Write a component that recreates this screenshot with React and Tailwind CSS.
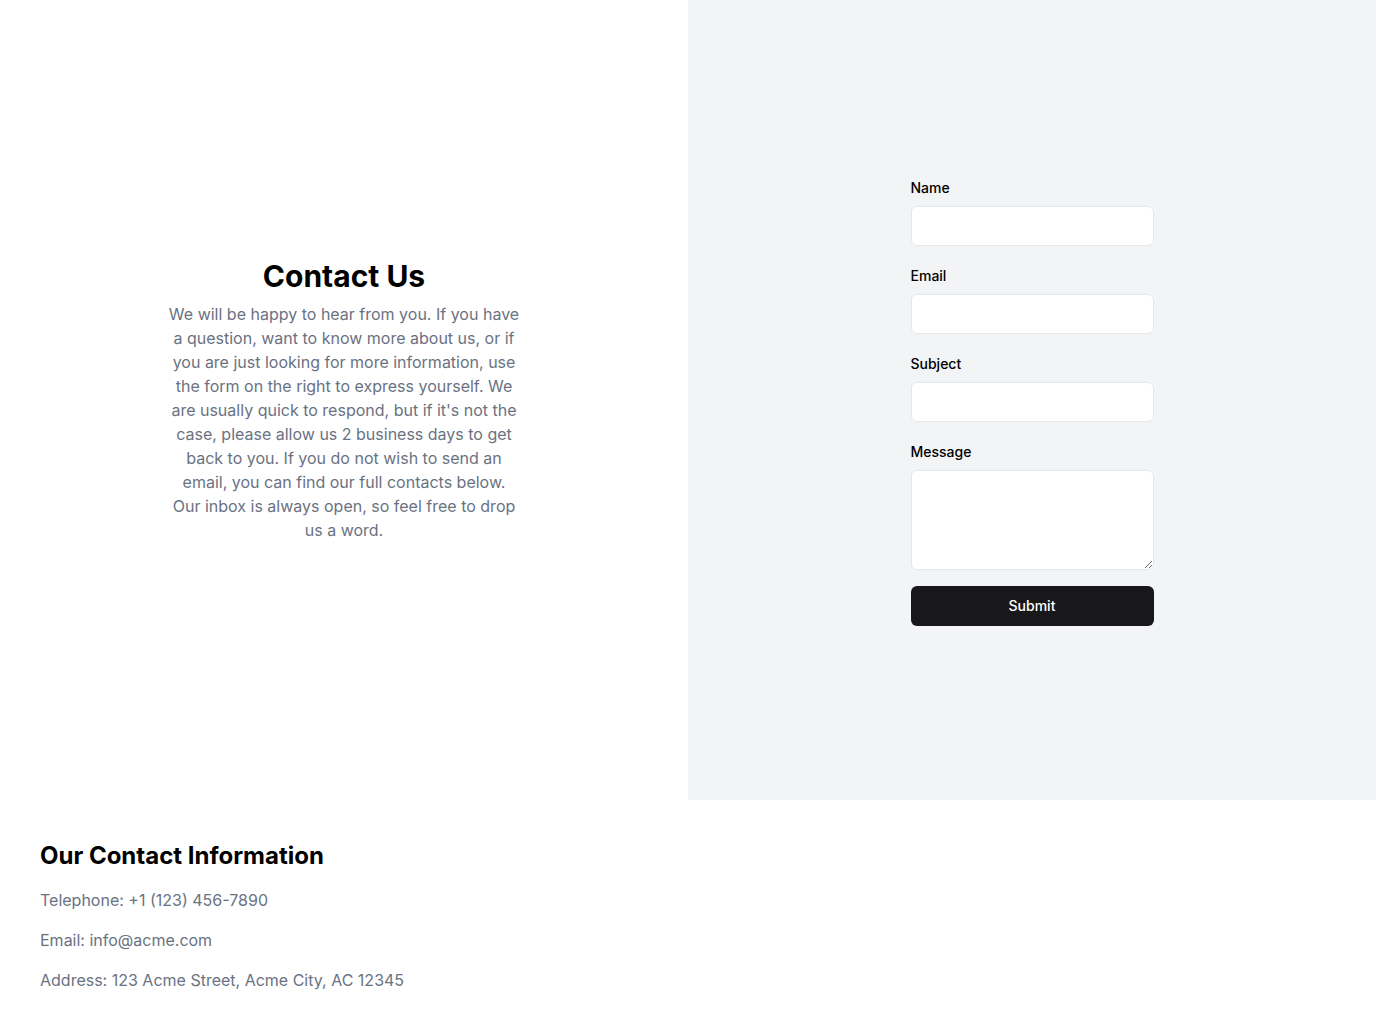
export default function App() {
  const fields = [
    { id: 'name', label: 'Name', type: 'text' },
    { id: 'email', label: 'Email', type: 'email' },
    { id: 'subject', label: 'Subject', type: 'text' },
  ]

  return (
    <div className="min-h-screen bg-white text-black" style={{ fontFamily: 'Inter, "Noto Sans", sans-serif' }}>
      <div className="grid grid-cols-2 h-[800px]">
        <section className="flex items-center justify-center">
          <div className="flex flex-col items-center text-center">
            <h1 className="text-3xl font-bold mb-2">Contact Us</h1>
            <p className="max-w-[352px] text-base leading-6 text-gray-500">
              We will be happy to hear from you. If you have a question, want to know more about us, or if you are just
              looking for more information, use the form on the right to express yourself. We are usually quick to
              respond, but if it's not the case, please allow us 2 business days to get back to you. If you do not wish
              to send an email, you can find our full contacts below. Our inbox is always open, so feel free to drop us a
              word.
            </p>
          </div>
        </section>

        <section className="flex items-center justify-center bg-gray-100">
          <form className="mt-1 w-[243px] flex flex-col gap-5" onSubmit={(e) => e.preventDefault()}>
            {fields.map((f) => (
              <div key={f.id} className="flex flex-col gap-2">
                <label htmlFor={f.id} className="text-sm font-medium leading-5">
                  {f.label}
                </label>
                <input
                  id={f.id}
                  type={f.type}
                  className="h-10 w-full rounded-md border border-gray-200 bg-white px-3 text-sm outline-none"
                />
              </div>
            ))}
            <div className="flex flex-col gap-2">
              <label htmlFor="message" className="text-sm font-medium leading-5">
                Message
              </label>
              <textarea
                id="message"
                className="h-[100px] w-full rounded-md border border-gray-200 bg-white px-3 py-2 text-sm outline-none"
              />
            </div>
            <button
              type="submit"
              className="-mt-1 h-10 w-full rounded-md bg-[#18181b] text-sm font-medium text-white"
            >
              Submit
            </button>
          </form>
        </section>
      </div>

      <footer className="p-10">
        <h2 className="text-2xl font-bold mb-4">Our Contact Information</h2>
        <p className="text-base text-gray-500 mb-4">Telephone: +1 (123) 456-7890</p>
        <p className="text-base text-gray-500 mb-4">Email: info@acme.com</p>
        <p className="text-base text-gray-500">Address: 123 Acme Street, Acme City, AC 12345</p>
      </footer>
    </div>
  )
}
